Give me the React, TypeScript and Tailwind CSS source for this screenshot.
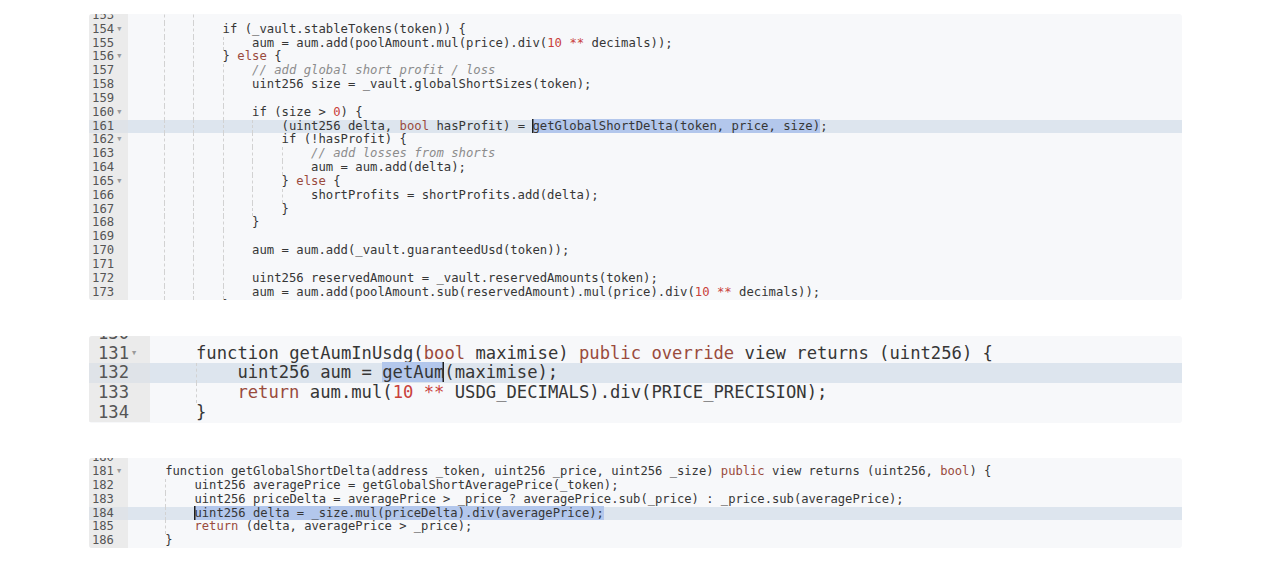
import React from "react";

type Line = {
  n: number;
  ind: number;
  text: string;
  fold?: boolean;
  hl?: boolean;
  sel?: [number, number];
  cur?: "start" | "end";
};

type Size = {
  font: string;
  row: string;
  gutter: string;
  numPad: string;
  codePad: string;
  shift: string;
  height: string;
};

const KEYWORDS = new Set(["else", "bool", "public", "override", "return"]);

function tokens(text: string, keyPrefix: string) {
  if (text.trim().startsWith("//")) {
    return [
      <span key={keyPrefix} className="italic text-[#8c8c8c]">
        {text}
      </span>,
    ];
  }
  return text.split(/(\b\w+\b|\*\*)/).map((t, i) => {
    if (t === "") return null;
    let cls = "";
    if (KEYWORDS.has(t)) cls = "text-[#9a4b3d]";
    else if (/^\d+$/.test(t) || t === "**") cls = "text-[#c9403a]";
    return (
      <span key={keyPrefix + i} className={cls}>
        {t}
      </span>
    );
  });
}

function CodeText({ line }: { line: Line }) {
  if (!line.sel) return <>{tokens(line.text, "t")}</>;
  const [a, b] = line.sel;
  const cursor =
    line.cur === "start"
      ? "shadow-[inset_1.5px_0_0_#1f1f1f]"
      : "shadow-[inset_-1.5px_0_0_#1f1f1f]";
  return (
    <>
      {tokens(line.text.slice(0, a), "a")}
      <span className={`bg-[#b3c7ec] ${cursor}`}>{tokens(line.text.slice(a, b), "b")}</span>
      {tokens(line.text.slice(b), "c")}
    </>
  );
}

function Panel({ lines, size }: { lines: Line[]; size: Size }) {
  return (
    <div className={`ml-[89px] w-[1093px] overflow-hidden rounded-[3px] bg-[#f7f8fa] ${size.height}`}>
      <div className={`flex flex-col ${size.shift}`} style={{ fontFamily: '"DejaVu Sans Mono", monospace' }}>
        {lines.map((l) => (
          <div key={l.n} className={`flex ${size.row} ${size.font} ${l.hl ? "bg-[#dde5ee]" : ""}`}>
            <div
              className={`flex shrink-0 items-center ${size.gutter} ${size.numPad} text-[#555] ${
                l.hl ? "bg-[#dfe3e8]" : "bg-[#ebebeb]"
              }`}
            >
              <span>{l.n}</span>
              {l.fold && <span className="ml-[3px] text-[7px] text-[#9a9a9a]">▼</span>}
            </div>
            <div className={`flex whitespace-pre text-[#363636] ${size.codePad}`}>
              {Array.from({ length: Math.ceil(l.ind / 4) }).map((_, k) => (
                <div
                  key={k}
                  className={`w-[4ch] shrink-0 self-stretch ${k > 0 ? "border-l border-dashed border-[#d2d2d2]" : ""}`}
                />
              ))}
              <span>
                <CodeText line={l} />
              </span>
            </div>
          </div>
        ))}
      </div>
    </div>
  );
}

const small: Size = {
  font: "text-[12.15px]",
  row: "h-[13.84px] leading-[13.84px]",
  gutter: "w-[39px]",
  numPad: "pl-[3px]",
  codePad: "pl-[6px]",
  shift: "-mt-[5px]",
  height: "h-[286px]",
};

const PANEL1: Line[] = [
  { n: 153, ind: 12, text: "" },
  { n: 154, ind: 12, fold: true, text: "if (_vault.stableTokens(token)) {" },
  { n: 155, ind: 16, text: "aum = aum.add(poolAmount.mul(price).div(10 ** decimals));" },
  { n: 156, ind: 12, fold: true, text: "} else {" },
  { n: 157, ind: 16, text: "// add global short profit / loss" },
  { n: 158, ind: 16, text: "uint256 size = _vault.globalShortSizes(token);" },
  { n: 159, ind: 16, text: "" },
  { n: 160, ind: 16, fold: true, text: "if (size > 0) {" },
  {
    n: 161,
    ind: 20,
    hl: true,
    sel: [34, 73],
    cur: "start",
    text: "(uint256 delta, bool hasProfit) = getGlobalShortDelta(token, price, size);",
  },
  { n: 162, ind: 20, fold: true, text: "if (!hasProfit) {" },
  { n: 163, ind: 24, text: "// add losses from shorts" },
  { n: 164, ind: 24, text: "aum = aum.add(delta);" },
  { n: 165, ind: 20, fold: true, text: "} else {" },
  { n: 166, ind: 24, text: "shortProfits = shortProfits.add(delta);" },
  { n: 167, ind: 20, text: "}" },
  { n: 168, ind: 16, text: "}" },
  { n: 169, ind: 16, text: "" },
  { n: 170, ind: 16, text: "aum = aum.add(_vault.guaranteedUsd(token));" },
  { n: 171, ind: 16, text: "" },
  { n: 172, ind: 16, text: "uint256 reservedAmount = _vault.reservedAmounts(token);" },
  { n: 173, ind: 16, text: "aum = aum.add(poolAmount.sub(reservedAmount).mul(price).div(10 ** decimals));" },
  { n: 174, ind: 12, text: "}" },
];

const PANEL2: Line[] = [
  { n: 130, ind: 4, text: "" },
  {
    n: 131,
    ind: 4,
    fold: true,
    text: "function getAumInUsdg(bool maximise) public override view returns (uint256) {",
  },
  { n: 132, ind: 8, hl: true, sel: [14, 20], cur: "end", text: "uint256 aum = getAum(maximise);" },
  { n: 133, ind: 8, text: "return aum.mul(10 ** USDG_DECIMALS).div(PRICE_PRECISION);" },
  { n: 134, ind: 4, text: "}" },
];

const PANEL3: Line[] = [
  { n: 180, ind: 0, text: "" },
  {
    n: 181,
    ind: 4,
    fold: true,
    text: "function getGlobalShortDelta(address _token, uint256 _price, uint256 _size) public view returns (uint256, bool) {",
  },
  { n: 182, ind: 8, text: "uint256 averagePrice = getGlobalShortAveragePrice(_token);" },
  {
    n: 183,
    ind: 8,
    text: "uint256 priceDelta = averagePrice > _price ? averagePrice.sub(_price) : _price.sub(averagePrice);",
  },
  {
    n: 184,
    ind: 8,
    hl: true,
    sel: [0, 56],
    cur: "start",
    text: "uint256 delta = _size.mul(priceDelta).div(averagePrice);",
  },
  { n: 185, ind: 8, text: "return (delta, averagePrice > _price);" },
  { n: 186, ind: 4, text: "}" },
  { n: 187, ind: 0, text: "" },
];

export default function App() {
  return (
    <div className="flex h-[568px] w-[1280px] flex-col bg-white pt-[14px]">
      <Panel lines={PANEL1} size={{ ...small, font: "text-[12.25px]" }} />
      <div className="mt-[36px]">
        <Panel
          lines={PANEL2}
          size={{
            font: "text-[17.2px]",
            row: "h-[19.67px] leading-[19.67px]",
            gutter: "w-[61px]",
            numPad: "pl-[9px]",
            codePad: "pl-[4.6px]",
            shift: "-mt-[12px]",
            height: "h-[87px]",
          }}
        />
      </div>
      <div className="mt-[35px]">
        <Panel
          lines={PANEL3}
          size={{ ...small, codePad: "pl-[8px]", shift: "-mt-[6.8px]", height: "h-[90px]" }}
        />
      </div>
    </div>
  );
}
